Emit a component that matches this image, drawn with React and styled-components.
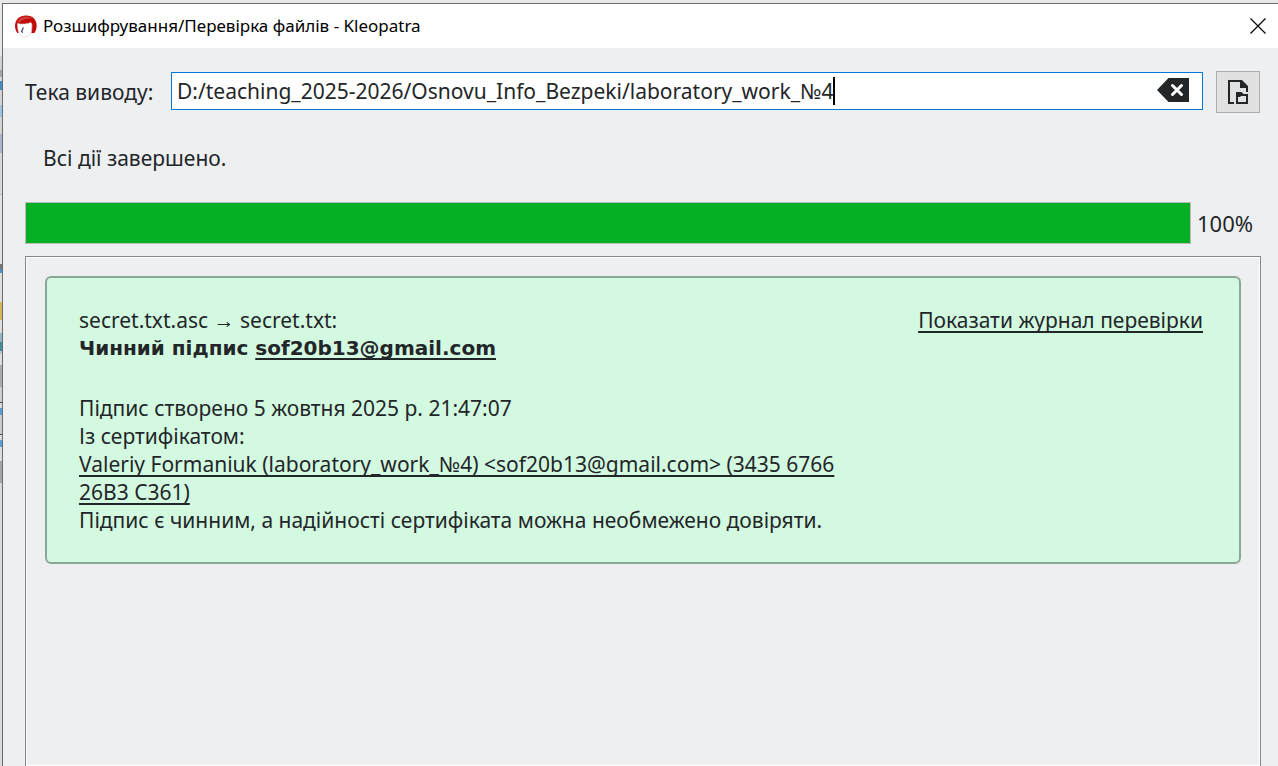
import React, { useState } from "react";
import styled, { createGlobalStyle } from "styled-components";

const GlobalStyle = createGlobalStyle`
  *, *::before, *::after { box-sizing: border-box; }
  html, body { margin: 0; height: 100%; overflow: hidden; }
  #root { height: 100%; }
`;

const Desktop = styled.div`
  height: 100%;
  min-height: 400px;
  padding: 3px 0 0 2px;
  display: flex;
  background: linear-gradient(
    #e8e8e8 0 56px, #d2d2d2 56px 70px, #a4a4a4 70px 77px, #d8d8d8 77px 81px,
    #3e8fc0 81px 90px, #d4d4d4 90px 105px, #9cc4e4 105px 117px, #d4d4d4 117px 134px,
    #aab4cf 134px 153px, #d8d8d8 153px 194px, #bdbdbd 194px 195px, #e2e2e2 195px 264px,
    #777777 264px 269px, #4f8fd0 269px 273px, #dedede 273px 302px, #d6b557 302px 320px,
    #dedede 320px 333px, #8fb9c4 333px 342px, #3f8d98 342px 351px, #b5c6c9 351px 354px,
    #dedede 354px 365px, #aaaaaa 365px 387px, #d0d0d0 387px 402px, #444444 402px 403px,
    #dcdcdc 403px 408px, #55a1d6 408px 415px, #cccccc 415px 434px, #444444 434px 435px,
    #dcdcdc 435px 440px, #55a1d6 440px 447px, #dcdcdc 447px 461px, #a6a6a6 461px 483px,
    #dadada 483px
  );
`;

const Window = styled.main`
  flex: 1;
  min-width: 0;
  display: flex;
  flex-direction: column;
  border-top: 1px solid #6b6b6b;
  border-left: 1px solid #6b6b6b;
  background: #eeeff1;
  color: #232629;
  font: 21px/28px "Noto Sans", sans-serif;
`;

const TitleBar = styled.header`
  height: 44px;
  flex: none;
  display: flex;
  align-items: center;
  gap: 5px;
  padding: 0 12px 0 11px;
  background: #ffffff;
  color: #000000;
`;

const Title = styled.h1`
  flex: 1;
  margin: 0;
  font: 17px/24px "Noto Sans", sans-serif;
`;

const CloseButton = styled.button`
  display: flex;
  padding: 0;
  border: 0;
  background: none;
  color: #000000;
`;

const Body = styled.div`
  flex: 1;
  min-height: 0;
  display: flex;
  flex-direction: column;
  padding: 23px 17px 0 22px;
`;

const OutputRow = styled.div`
  display: flex;
  align-items: center;
  gap: 13px;
  padding-right: 1px;
`;

const OutputLabel = styled.label`
  width: 133px;
  flex: none;
  white-space: nowrap;
`;

const PathField = styled.div`
  flex: 1;
  min-width: 0;
  height: 38px;
  margin-bottom: 2px;
  display: flex;
  align-items: center;
  padding: 0 13px 0 5px;
  border: 1px solid #0078d7;
  background: #ffffff;
`;

const PathInput = styled.input`
  field-sizing: content;
  min-width: 0;
  padding: 0;
  border: 0;
  outline: 0;
  background: transparent;
  color: inherit;
  font: inherit;
`;

const Caret = styled.span`
  width: 2px;
  height: 28px;
  flex: none;
  background: #000000;
`;

const ClearButton = styled(CloseButton)`
  margin-left: auto;
  padding-bottom: 2px;
  color: #232629;
`;

const BrowseButton = styled.button`
  width: 44px;
  height: 42px;
  flex: none;
  display: flex;
  align-items: center;
  justify-content: center;
  padding: 0;
  border: 1px solid #adadad;
  background: #e1e1e1;
  color: #232629;
`;

const Status = styled.p`
  margin: 31px 18px 30px;
`;

const ProgressRow = styled.div`
  display: flex;
  align-items: center;
  gap: 6px;
`;

const ProgressBar = styled.progress`
  flex: 1;
  min-width: 0;
  height: 42px;
  appearance: none;
  border: 1px solid #bcbcbc;
  background: #e6e6e6;
  &::-webkit-progress-bar { background: #e6e6e6; }
  &::-webkit-progress-value { background: #06b025; }
`;

const Percent = styled.span`
  width: 64px;
  flex: none;
  font-size: 22px;
`;

const Results = styled.section`
  flex: 1;
  min-height: 0;
  margin-top: 12px;
  padding: 19px;
  border: 1px solid #828790;
  border-bottom: 0;
  box-shadow: inset 0 0 0 1px #ffffff;
`;

const ResultCard = styled.article`
  display: flex;
  align-items: flex-start;
  justify-content: space-between;
  gap: 24px;
  padding: 28px 36px 28px 32px;
  border: 2px solid #8aa898;
  border-radius: 6px;
  background: #d3f9e0;
`;

const Details = styled.div`
  max-width: 780px;
`;

const Line = styled.p`
  margin: 0;
`;

const Arrow = styled.span`
  font-family: "Liberation Serif", serif;
  line-height: 1;
`;

const Verdict = styled.h2`
  margin: 0 0 32px;
  font: bold 20px/28px "DejaVu Sans", sans-serif;
`;

const Link = styled.a`
  color: inherit;
  text-decoration: underline;
  text-decoration-thickness: 2px;
  text-decoration-skip-ink: none;
  text-underline-offset: 3px;
  white-space: ${(p) => (p.$nowrap ? "nowrap" : "normal")};
`;

const KleopatraIcon = () => (
  <svg width="24" height="24" viewBox="0 0 24 24" aria-hidden="true">
    <path d="M3.500 19C.5 16 .2 9 3 5.500C6 1 16 0 20 4.500C23.500 8 23.500 15 20.500 19Z" fill="#c20a0a" />
    <path d="M3 8C6 2 14 1 19 4.500C14 4 8 5 5 9Z" fill="#dc5c55" opacity=".6" />
    <path d="M3.500 9.500C8 10.500 13 10 17 8.500L18 11L17.500 18C16 21.500 12.500 23.500 9.500 23C5.500 22 3.500 18 3.500 9.500Z" fill="#ffffff" stroke="#cfcfcf" strokeWidth=".6" />
    <path d="M9.500 13.500L7.500 17.500L9 18.500" fill="none" stroke="#40465e" strokeWidth="1.200" />
  </svg>
);

const CloseIcon = () => (
  <svg width="16" height="16" viewBox="0 0 16 16" aria-hidden="true">
    <path d="M.5.5l15 15M15.500.5l-15 15" stroke="currentColor" strokeWidth="1.200" />
  </svg>
);

const ClearIcon = () => (
  <svg width="32" height="24" viewBox="0 0 32 24" aria-hidden="true">
    <path d="M0 12L11.500 0H32V24H11.500Z" fill="currentColor" />
    <path d="M15.500 7.500l9 9M24.500 7.500l-9 9" stroke="#fff" strokeWidth="3" strokeLinecap="round" />
  </svg>
);

const BrowseIcon = () => (
  <svg width="20" height="24" viewBox="0 0 20 24" aria-hidden="true">
    <path d="M0 0H14L20 6V12H18V8H12V2H2V22H6V24H0Z" fill="currentColor" />
    <path fillRule="evenodd" d="M8 12H13.500L15.500 14H20V24H8ZM10 17V22H18V16H13L12 17Z" fill="currentColor" />
  </svg>
);

export default function App() {
  const [path, setPath] = useState("D:/teaching_2025-2026/Osnovu_Info_Bezpeki/laboratory_work_№4");
  return (
    <>
      <GlobalStyle />
      <Desktop>
        <Window>
          <TitleBar>
            <KleopatraIcon />
            <Title>Розшифрування/Перевірка файлів - Kleopatra</Title>
            <CloseButton aria-label="Закрити"><CloseIcon /></CloseButton>
          </TitleBar>
          <Body>
            <OutputRow>
              <OutputLabel htmlFor="output">Тека виводу:</OutputLabel>
              <PathField>
                <PathInput id="output" value={path} spellCheck={false} onChange={(e) => setPath(e.target.value)} />
                <Caret />
                <ClearButton aria-label="Очистити" onClick={() => setPath("")}><ClearIcon /></ClearButton>
              </PathField>
              <BrowseButton aria-label="Вибрати теку"><BrowseIcon /></BrowseButton>
            </OutputRow>
            <Status id="status">Всі дії завершено.</Status>
            <ProgressRow>
              <ProgressBar value={100} max={100} aria-labelledby="status" />
              <Percent>100%</Percent>
            </ProgressRow>
            <Results>
              <ResultCard>
                <Details>
                  <Line>secret.txt.asc <Arrow>→</Arrow> secret.txt:</Line>
                  <Verdict>Чинний підпис <Link href="mailto:sof20b13@gmail.com">sof20b13@gmail.com</Link></Verdict>
                  <Line>Підпис створено 5 жовтня 2025 р. 21:47:07</Line>
                  <Line>Із сертифікатом:</Line>
                  <Line><Link href="#certificate">Valeriy Formaniuk (laboratory_work_№4) &lt;sof20b13@gmail.com&gt; (3435 6766 26B3 C361)</Link></Line>
                  <Line>Підпис є чинним, а надійності сертифіката можна необмежено довіряти.</Line>
                </Details>
                <Link href="#log" $nowrap>Показати журнал перевірки</Link>
              </ResultCard>
            </Results>
          </Body>
        </Window>
      </Desktop>
    </>
  );
}
